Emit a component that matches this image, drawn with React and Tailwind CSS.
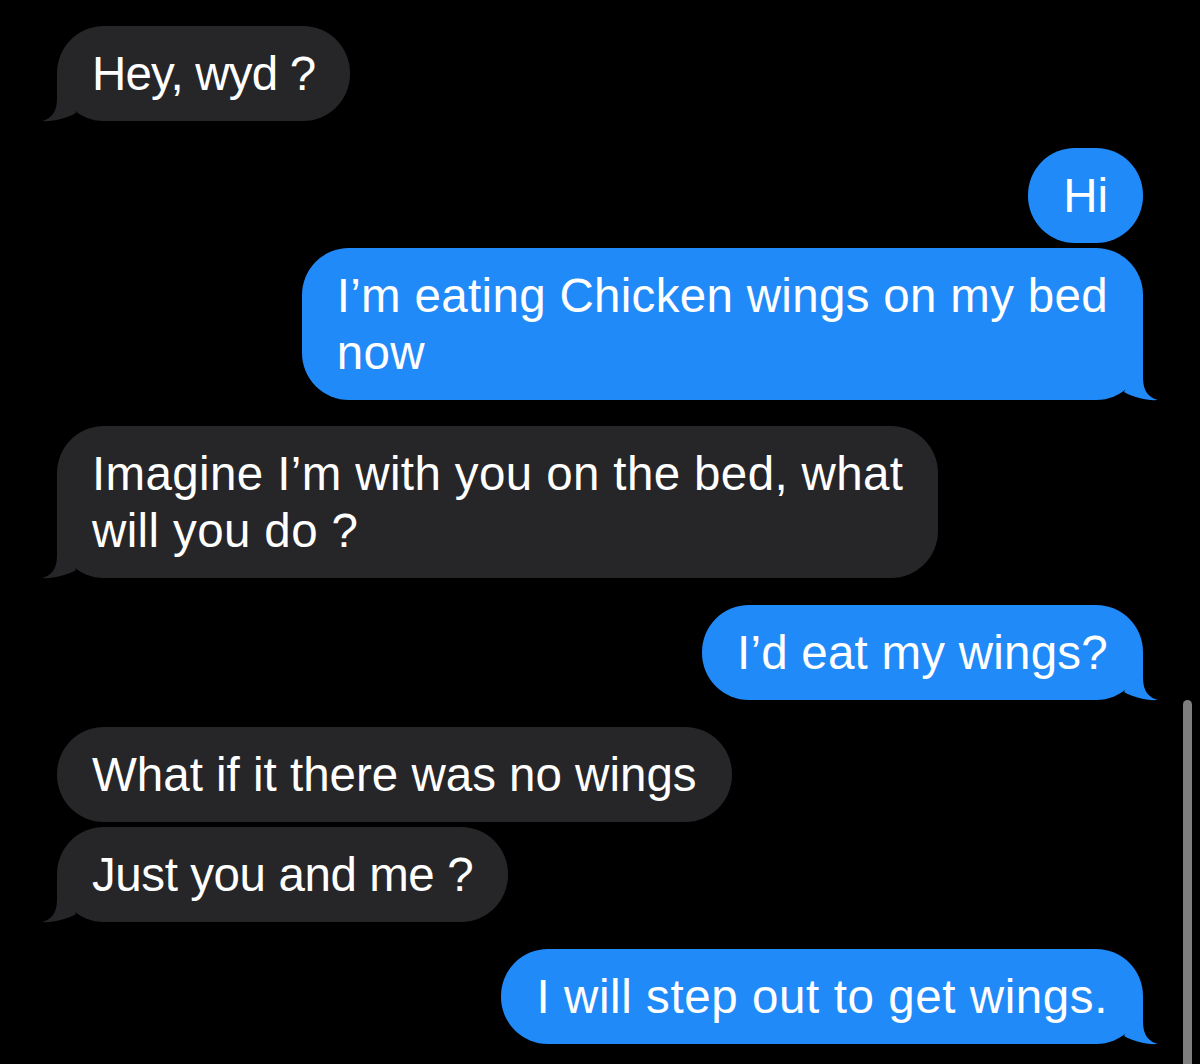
import React from "react";

const messages = [
  { id: 1, from: "them", lines: ["Hey, wyd ?"], tail: true, track: "tracking-[-0.8px]" },
  { id: 2, from: "me", lines: ["Hi"], tail: false, gap: "mt-[27px]" },
  { id: 3, from: "me", lines: ["I’m eating Chicken wings on my bed", "now"], tail: true, gap: "mt-[5px]", track: "tracking-[0.32px]" },
  { id: 4, from: "them", lines: ["Imagine I’m with you on the bed, what", "will you do ?"], tail: true, gap: "mt-[26px]", track: "tracking-[0.38px]" },
  { id: 5, from: "me", lines: ["I’d eat my wings?"], tail: true, gap: "mt-[27px]", track: "tracking-[0.24px]" },
  { id: 6, from: "them", lines: ["What if it there was no wings"], tail: false, gap: "mt-[27px]" },
  { id: 7, from: "them", lines: ["Just you and me ?"], tail: true, gap: "mt-[5px]", track: "tracking-[-0.41px]" },
  { id: 8, from: "me", lines: ["I will step out to get wings."], tail: true, gap: "mt-[27px]", track: "tracking-[0.59px]" },
];

function Tail({ side, color }) {
  // drawn for the left side, mirrored for the right
  return (
    <svg
      width="36"
      height="50"
      viewBox="0 0 36 50"
      className={
        side === "left"
          ? "absolute -left-[16px] -bottom-[2px] overflow-visible"
          : "absolute -right-[16px] -bottom-[2px] overflow-visible -scale-x-100"
      }
    >
      <path
        d="M16 1 L16 26 C16 39 10 46 1 48 C12 49 26 45 35 40 Z"
        fill={color}
      />
    </svg>
  );
}

function Bubble({ msg }) {
  const mine = msg.from === "me";
  const color = mine ? "#218af9" : "#262629";
  return (
    <div className={`flex ${mine ? "justify-end" : "justify-start"} ${msg.gap || ""}`}>
      <div
        className={`relative rounded-[47px] px-[35px] py-[19px] text-white text-[47.5px] leading-[57px] whitespace-nowrap ${
          mine ? "bg-[#218af9]" : "bg-[#262629]"
        } ${msg.track || ""}`}
      >
        {msg.tail && <Tail side={mine ? "right" : "left"} color={color} />}
        <div className="relative">
          {msg.lines.map((l, i) => (
            <div key={i}>{l}</div>
          ))}
        </div>
      </div>
    </div>
  );
}

export default function App() {
  return (
    <div
      className="relative h-[1064px] w-full overflow-hidden bg-black"
      style={{ fontFamily: '"Liberation Sans", Arial, sans-serif' }}
    >
      <div className="flex flex-col px-[57px] pt-[26px]">
        {messages.map((m) => (
          <Bubble key={m.id} msg={m} />
        ))}
      </div>
      <div className="absolute right-[8px] top-[700px] -bottom-[10px] w-[9px] rounded-full bg-[#7f7f7f]"></div>
    </div>
  );
}
